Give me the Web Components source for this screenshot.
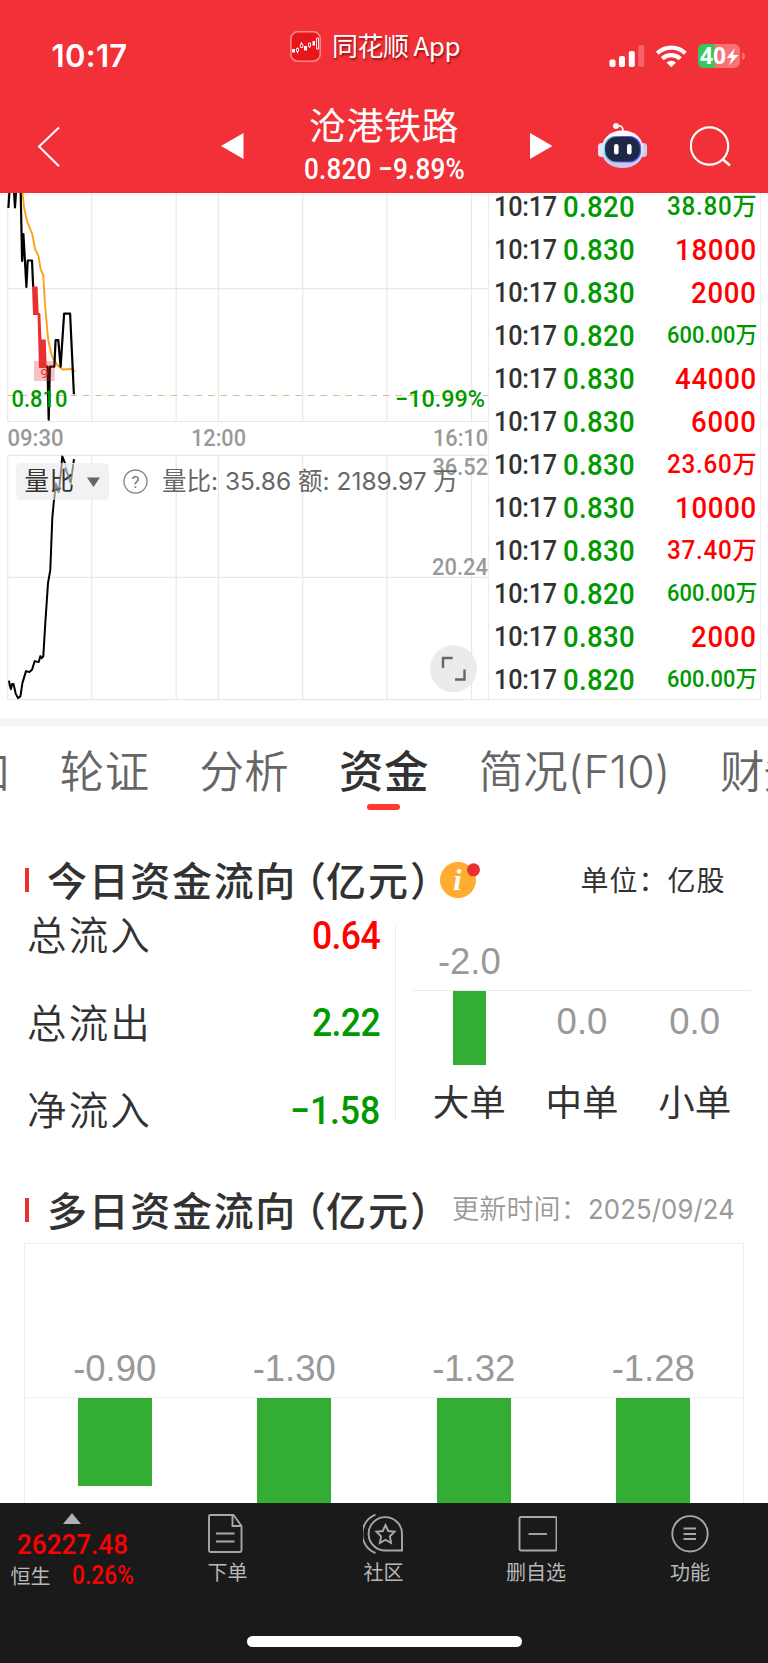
<!DOCTYPE html>
<html lang="zh-CN">
<head>
<meta charset="utf-8">
<meta name="viewport" content="width=768">
<title>沧港铁路</title>
<style>
html, body { margin: 0; padding: 0; }
body {
    width: 768px;
    height: 1663px;
    overflow: hidden;
    background: #fff;
    color: #323232;
    font-family: Inter, "Noto Sans CJK SC", sans-serif;
    --din: Roboto, "Noto Sans CJK SC", sans-serif;
    --up: #ff0000;
    --down: #009900;
    --bar: #34ad34;
    --line: #ebebeb;
}
</style>
</head>
<body>
<stock-page></stock-page>

<script>
function define(name, html, setup) {
    const template = document.createElement('template');
    template.innerHTML = html;
    customElements.define(name, class extends HTMLElement {
        constructor() {
            super();
            this.attachShadow({mode: 'open'});
            this.shadowRoot.appendChild(template.content.cloneNode(true));
        }
        connectedCallback() {
            if (setup) setup(this, this.shadowRoot);
        }
    });
}

define('status-bar', `
<style>
:host { display: flex; height: 92px; align-items: flex-start; color: #fff; }
.time { margin: 38px 0 0 51.500px; font-size: 31px; line-height: 36px; font-weight: 600; }
.logo { margin: 31px 0 0 162.500px; width: 31px; height: 31px; }
.app { margin: 27px 0 0 11px; font: 26px/36px "Noto Sans CJK SC", sans-serif; text-shadow: 1px 2px 2px rgba(90,0,0,.6); }
.sys { margin: 43px 0 0 149px; width: 138px; height: 26px; overflow: visible; }
</style>
<fit-text class="time" w="76">10:17</fit-text>
<svg class="logo" viewBox="0 0 31 31">
    <rect x=".8" y=".8" width="29.4" height="29.4" rx="7" fill="#e8151b" stroke="#f98b8e" stroke-width="1.5"/>
    <path d="M2 11h27M2 21h27M11 2v27M22 2v27" stroke="#d5262a" stroke-width=".6"/>
    <path d="M2 18h3v3.500H2zM14 15h3v4.500h-3zM22.500 10h2.500v4.500h-2.500z" fill="#fff"/>
    <path d="M7.500 17.500v-1M6.500 17.500h2v3h-2zM7.500 20.500v2M11.500 13v-2M10.300 13h2.500v3.500h-2.500zM18.500 12h2v3.500h-2zM19.500 15.500v1.500M26.500 7h2v11h-2z" fill="none" stroke="#fff" stroke-width=".9"/>
</svg>
<fit-text class="app" w="128">同花顺 App</fit-text>
<svg class="sys" viewBox="609 43 138 26">
    <g fill="#fff">
        <rect x="609.500" y="59.500" width="6" height="7.500" rx="1.800"/>
        <rect x="619" y="56" width="6" height="11" rx="1.800"/>
        <rect x="628.800" y="51" width="6" height="16" rx="1.800"/>
        <rect x="638.200" y="45" width="6" height="22" rx="1.800" opacity=".25"/>
    </g>
    <g fill="none" stroke="#fff" stroke-width="4.200">
        <path d="M657.300 53.200a20.500 20.500 0 0 1 28 0"/>
        <path d="M662.300 58.700a13 13 0 0 1 18 0"/>
    </g>
    <path d="M666.500 62.600a7 7 0 0 1 9.600 0l-4.800 4.600z" fill="#fff"/>
    <path d="M704 44h30a6 6 0 0 1 6 6v12a6 6 0 0 1-6 6h-30a6 6 0 0 1-6-6V50a6 6 0 0 1 6-6z" fill="#f77277"/>
    <path d="M704 44h10.700v24H704a6 6 0 0 1-6-6V50a6 6 0 0 1 6-6z" fill="#35c759"/>
    <path d="M742 52q3 1 3 4t-3 4z" fill="#f77277"/>
    <text x="700" y="64.300" font-family="Open Sans" font-size="22.500" font-weight="700" fill="#fff" textLength="26" lengthAdjust="spacingAndGlyphs">40</text>
    <path d="M735 48l-8.500 10h5.200l-2.800 7.500 9.600-10.500h-5.600z" fill="#fff"/>
</svg>
`);

define('stock-nav', `
<style>
:host { display: flex; height: 100px; align-items: flex-start; color: #fff; }
svg { display: block; flex: none; }
.back { margin: 34px 0 0 36px; }
.prev { margin: 41px 0 0 159px; }
.mid { width: 170px; margin-left: 54px; display: flex; flex-direction: column; align-items: center; }
.name { font: 37px/40px "Noto Sans CJK SC", sans-serif; margin-top: 12px; }
.quote { font: 500 29px/28px var(--din); margin-top: 11px; }
.next { margin: 41px 0 0 61px; }
.bot { margin: 29px 0 0 43px; }
.find { margin: 34px 0 0 42px; }
</style>
<svg class="back" width="26" height="42" viewBox="0 0 26 42"><path d="M23 1.500L3 20.500 23 40.200" fill="none" stroke="#fff" stroke-width="2"/></svg>
<svg class="prev" width="24" height="26" viewBox="0 0 24 26"><path d="M0 13L22.500 0v26z" fill="#fff"/></svg>
<div class="mid">
    <fit-text class="name" w="150">沧港铁路</fit-text>
    <fit-text class="quote" w="161" scale=".9">0.820 −9.89%</fit-text>
</div>
<svg class="next" width="24" height="26" viewBox="0 0 24 26"><path d="M22.500 13L0 0v26z" fill="#fff"/></svg>
<svg class="bot" width="51" height="48" viewBox="0 0 51 48">
    <defs>
        <linearGradient id="shell" x2="0" y2="1"><stop offset="0" stop-color="#fff"/><stop offset="1" stop-color="#c5c3ea"/></linearGradient>
        <linearGradient id="rim"><stop offset="0" stop-color="#73d9e8"/><stop offset=".5" stop-color="#6d4bd8"/><stop offset="1" stop-color="#4f65ff"/></linearGradient>
    </defs>
    <path d="M18 5q8-2 8 5" fill="none" stroke="#eee" stroke-width="1.800"/>
    <circle cx="19" cy="5" r="3" fill="#f3f1fb"/>
    <rect x="1" y="22" width="7" height="14" rx="3.500" fill="#e4e0f4"/>
    <rect x="43" y="22" width="7" height="14" rx="3.500" fill="#cfccf1"/>
    <path d="M25.500 9.500C38 9.500 46.500 17.500 46.500 28.500S38 47 25.500 47 4.500 39.500 4.500 28.500 13 9.500 25.500 9.500z" fill="url(#shell)"/>
    <rect x="7.500" y="15.500" width="36" height="25.500" rx="11" fill="#1e2948" stroke="url(#rim)" stroke-width="1.200"/>
    <rect x="17" y="23" width="4.600" height="10.500" rx="2.300" fill="#fff"/>
    <rect x="30" y="23" width="4.600" height="10.500" rx="2.300" fill="#fff"/>
</svg>
<svg class="find" width="42" height="42" viewBox="0 0 42 42"><circle cx="19.500" cy="20" r="18.700" fill="none" stroke="#fff" stroke-width="2.200"/><path d="M33 33.500l7 6" stroke="#fff" stroke-width="2.400"/></svg>
`);

define('trend-chart', `
<style>
:host { display: block; position: relative; width: 488px; height: 518px; }
svg { display: block; }
.plot { overflow: visible; }
.grid { fill: none; stroke: #e8e8e8; stroke-width: 1.200; }
text { font-family: Roboto, sans-serif; }
.axis { font-size: 23.500px; font-weight: 500; fill: #999; }
.price { font-size: 23.500px; font-weight: 500; fill: #009900; }
.menu {
    position: absolute; left: 15.500px; top: 271px; width: 93px; height: 37px; border-radius: 5px;
    background: rgba(240,240,240,.88); box-sizing: border-box; padding: 0 9px 0 9px;
    display: flex; align-items: center; justify-content: space-between; font-size: 24.500px; line-height: 35px; color: #323232;
}
.veil { position: absolute; left: 15px; top: 271px; }
.info { position: absolute; left: 123px; top: 271px; height: 37px; display: flex; align-items: center; gap: 14px; font-size: 24.500px; line-height: 37px; color: #666; }
.expand { position: absolute; left: 430px; top: 453px; }
</style>
<svg class="plot" width="488" height="518" viewBox="0 192 488 518">
    <g class="grid">
        <path d="M7.700 192v229.500h480M7.700 288.700h480M91.700 192v229.500M176.200 192v229.500M218.500 192v229.500M302.700 192v229.500M387 192v229.500M471.600 192v229.500"/>
        <path d="M487 455.300H7.700v244.400h480M7.700 577.400h480M91.700 455v245M176.200 455v245M218.500 455v245M302.700 455v245M387 455v245M471.600 455v245"/>
    </g>
    <path d="M8 395.500h480" stroke="#dcb98a" stroke-width="1.200" stroke-dasharray="6.500 6"/>
    <path d="M22.500 192l1.500 15 3 14 5.500 14 2.500 14 3.500 7 2 13 2.700 6 2 32 3 33 4 17 5 8 5.500 4.500 8.500-.5 4 2.500" fill="none" stroke="#ff9f1c" stroke-width="1.900"/>
    <path d="M8.400 208l1-16M14 192l1 15.500 1-15.500M20.700 192l1.400 69 1.300-27 3 53 1.300-26.500H32l1.200 27M45.500 366.700h2l1.200 53 1.200-53h4.400l1.300-26.500h2.700l2.300 26.500 3.500-53h6l3.800 80.500" fill="none" stroke="#000" stroke-width="2.200" stroke-linejoin="round"/>
    <path d="M32 286.500h5.500l1.200 26.500h1.600l1.200 26.500h4.200l1 27-1.700 1.500h-6l-1.500-53H33z" fill="#e93030"/>
    <rect x="34" y="361" width="20.700" height="20" fill="rgba(233,48,48,.3)"/>
    <text x="40.500" y="377.500" font-size="13.500" fill="#e93030">9</text>
    <g class="axis">
        <text x="7.500" y="445.500" textLength="56" lengthAdjust="spacingAndGlyphs">09:30</text>
        <text x="191" y="445.500" textLength="55" lengthAdjust="spacingAndGlyphs">12:00</text>
        <text x="433" y="445.500" textLength="55" lengthAdjust="spacingAndGlyphs">16:10</text>
        <text x="432.500" y="475" textLength="55.500" lengthAdjust="spacingAndGlyphs">36.52</text>
        <text x="432" y="575.300" textLength="56" lengthAdjust="spacingAndGlyphs">20.24</text>
    </g>
    <g class="price">
        <text x="11.500" y="407" textLength="56" lengthAdjust="spacingAndGlyphs">0.810</text>
        <text x="395" y="407" textLength="90" lengthAdjust="spacingAndGlyphs">−10.99%</text>
    </g>
    <path d="M9 680.600l.7 4.500 1.300 4 1-5h1.500l2.200 9.500 2.300 4.500 2.400-1.700 2-13.300 3.600-12 3.400 1 2.600-2.300 2.700-8.700 4 1 1.700-6 1.300 2 1.600-1.700 2-33.300 2.700-40 2.300-13.300 2-51.700 2-21.700 1.400-13.300 3 9.300 3.600-36 2.700 6.700 5.700 20 3.300-24" fill="none" stroke="#000" stroke-width="2" stroke-linejoin="round"/>
</svg>
<div class="menu"><fit-text w="50">量比</fit-text><svg width="13" height="10"><path d="M0 .5h13L6.500 10z" fill="#666"/></svg></div>
<svg class="veil" width="93" height="37" viewBox="15 463 93 37"><path d="M54.300 500l1.400-16.700 3 9.300 3.300-30M65 467.500l5.700 15.800 2.500-19" fill="none" stroke="#777" stroke-width="1.700" opacity=".8"/></svg>
<div class="info">
    <svg width="25" height="25" viewBox="0 0 25 25"><circle cx="12.500" cy="12.500" r="11.500" fill="none" stroke="#888" stroke-width="1.400"/><text x="12.500" y="18.500" text-anchor="middle" font-size="17" fill="#777">?</text></svg>
    <fit-text w="296">量比: 35.86 额: 2189.97 万</fit-text>
</div>
<svg class="expand" width="48" height="48" viewBox="0 0 48 48"><circle cx="23.500" cy="23.700" r="23.500" fill="#ebebeb"/><path d="M22.700 13H13v10M25 34.500h9.500v-10" fill="none" stroke="#666" stroke-width="2.400"/></svg>
`);

const ticks = [
    ['0.820', '38.80万', 'down', 'm'],
    ['0.830', '18000', 'up', ''],
    ['0.830', '2000', 'up', ''],
    ['0.820', '600.00万', 'down', 's'],
    ['0.830', '44000', 'up', ''],
    ['0.830', '6000', 'up', ''],
    ['0.830', '23.60万', 'up', 'm'],
    ['0.830', '10000', 'up', ''],
    ['0.830', '37.40万', 'up', 'm'],
    ['0.820', '600.00万', 'down', 's'],
    ['0.830', '2000', 'up', ''],
    ['0.820', '600.00万', 'down', 's']
];

define('tick-list', `
<style>
:host { display: block; width: 271px; height: 507px; overflow: hidden; border: 1px solid var(--line); border-width: 0 1px 1px 1.500px; }
.rows { margin-top: -7px; }
.row { display: flex; align-items: center; height: 43px; padding: 0 3px 0 4.500px; font-family: var(--din); font-weight: 500; font-size: 30px; line-height: 43px; }
.time { font-size: 28px; margin-right: 6px; }
.price { color: var(--down); }
.vol { margin-left: auto; }
.up { color: var(--up); }
.down { color: var(--down); }
.m { font-size: 25.500px; }
.s { font-size: 23px; }
</style>
<div class="rows"></div>
`, (el, root) => {
    root.querySelector('.rows').innerHTML = ticks.map(([price, vol, dir, size]) => `
        <div class="row">
            <fit-text class="time" w="63" scale=".9">10:17</fit-text>
            <fit-text class="price" w="72" scale=".92">${price}</fit-text>
            <fit-text class="vol ${dir} ${size}" w="${size ? 90.500 : vol.length * 16.400}" scale="${size ? 0.95 : 0.92}">${vol}</fit-text>
        </div>`).join('');
});

define('tab-strip', `
<style>
:host { display: flex; gap: 49.700px; width: 803px; height: 92px; box-sizing: border-box; margin-left: -35px; border-top: 8px solid #f5f5f5; font: 350 44.500px/92px Inter, "Noto Sans CJK SC", sans-serif; color: #666; }
fit-text { flex: none; height: 84px; }
.on { font-weight: 500; color: #323232; position: relative; }
.on::after { content: ""; position: absolute; left: 28px; bottom: 0; width: 33px; height: 6px; border-radius: 3px; background: #ff3931; }
</style>
<fit-text w="45">加</fit-text>
<fit-text w="90">轮证</fit-text>
<fit-text w="90">分析</fit-text>
<fit-text w="90" class="on">资金</fit-text>
<fit-text w="191.500">简况(F10)</fit-text>
<fit-text w="86">财务</fit-text>
`);

define('section-title', `
<style>
:host { display: flex; height: 24px; align-items: center; padding-left: 25px; line-height: 24px; white-space: nowrap; }
i { width: 4px; height: 24px; background: #e93030; margin-right: 18px; }
.text { display: flex; width: 393px; font: 550 40px/24px "Noto Sans CJK SC", sans-serif; margin-top: -2px; }
.paren { font-feature-settings: "halt"; }
.open { margin-left: 9px; }
</style>
<i></i>
<div class="text"><fit-text w="250"><slot name="title"></slot></fit-text><span class="paren open">（</span><fit-text w="84">亿元</fit-text><span class="paren">）</span></div>
<slot></slot>
`);

define('today-flow', `
<style>
:host { display: flex; height: 262px; }
.totals { width: 379px; box-sizing: border-box; padding-left: 27px; }
.row { display: flex; justify-content: space-between; align-items: center; height: 87.500px; font: 350 39.500px/60px "Noto Sans CJK SC", sans-serif; }
.label { margin-top: -5px; }
b { font: 500 39.500px/60px var(--din); margin-right: -1px; }
.up { color: var(--up); }
.down { color: var(--down); }
.rule { width: 1.500px; height: 195px; margin: 34px 17px 0 15.500px; background: #ebebeb; }
.orders { width: 338px; display: grid; grid-template-columns: repeat(3, 1fr); text-align: center; }
.col { display: flex; flex-direction: column; align-items: center; }
.above { width: 100%; height: 99px; border-bottom: 1px solid #ebebeb; box-sizing: border-box; padding-top: 49px; }
.below { height: 82px; }
.num { font: 36.500px/42px "Liberation Sans", sans-serif; color: #999; }
.below .num { margin-top: 10px; }
.fill { width: 33px; height: 73.500px; background: var(--bar); }
.name { font: 36.500px/56px "Noto Sans CJK SC", sans-serif; color: #323232; }
</style>
<div class="totals">
    <div class="row"><fit-text class="label" w="125">总流入</fit-text><b class="up"><fit-text w="68" scale=".9">0.64</fit-text></b></div>
    <div class="row"><fit-text class="label" w="125">总流出</fit-text><b class="down"><fit-text w="68" scale=".9">2.22</fit-text></b></div>
    <div class="row"><fit-text class="label" w="125">净流入</fit-text><b class="down"><fit-text w="90" scale=".9">−1.58</fit-text></b></div>
</div>
<div class="rule"></div>
<div class="orders">
    <div class="col"><div class="above num">-2.0</div><div class="below"><div class="fill"></div></div><div class="name">大单</div></div>
    <div class="col"><div class="above"></div><div class="below"><div class="num">0.0</div></div><div class="name">中单</div></div>
    <div class="col"><div class="above"></div><div class="below"><div class="num">0.0</div></div><div class="name">小单</div></div>
</div>
`);

define('daily-bars', `
<style>
:host { display: grid; grid-template-columns: repeat(4, 1fr); box-sizing: border-box; height: 260px; margin: 21px 24px 0; border: 1.500px solid #f0f0f0; border-bottom: 0; overflow: hidden; }
.head { height: 154px; box-sizing: border-box; border-bottom: 1.500px solid #f0f0f0; padding-top: 104px; text-align: center; font: 36.500px/42px "Liberation Sans", sans-serif; color: #999; }
.fill { width: 74px; margin: 0 auto; background: var(--bar); }
</style>
`, (el, root) => {
    [['-0.90', 88], ['-1.30', 127], ['-1.32', 129], ['-1.28', 125]].forEach(([value, height]) => {
        const day = document.createElement('div');
        day.innerHTML = `<div class="head">${value}</div><div class="fill" style="height:${height}px"></div>`;
        root.appendChild(day);
    });
});

define('bar-item', `
<style>
:host { display: flex; flex-direction: column; align-items: center; }
.label { font: 20px/28px "Noto Sans CJK SC", sans-serif; color: #b8b8b8; margin-top: 3px; }
</style>
<slot name="icon"></slot>
<div class="label"><slot></slot></div>
`);

define('bottom-bar', `
<style>
:host { display: flex; flex-direction: column; height: 160px; background: #1a1a1a; }
.items { display: flex; height: 133px; }
.index { width: 144px; display: flex; flex-direction: column; align-items: center; color: var(--up); font-family: var(--din); }
.index svg { margin-top: 10px; }
.point { font-size: 28px; font-weight: 500; line-height: 34px; margin-top: 4px; }
.sub { display: flex; align-items: center; font-size: 25px; font-weight: 500; line-height: 30px; gap: 21px; margin-top: -1px; }
.hs { font: 20px/30px "Noto Sans CJK SC", sans-serif; color: #b8b8b8; }
bar-item { padding-top: 10px; }
bar-item svg { fill: none; stroke: #a8a8a8; stroke-width: 1.900; }
.home { width: 275px; height: 11px; border-radius: 6px; background: #fff; margin-left: 247px; }
</style>
<div class="items">
    <div class="index">
        <svg width="18" height="11"><path d="M0 11L9 0l9 11z" fill="#b0b0b0"/></svg>
        <fit-text class="point" w="111" scale=".93">26227.48</fit-text>
        <div class="sub"><span class="hs">恒生</span><fit-text w="62" scale=".9">0.26%</fit-text></div>
    </div>
    <bar-item style="width:167px">
        <svg slot="icon" width="42" height="42" viewBox="0 0 42 42"><path d="M7 2h19.500l8 11v24.500a1.500 1.500 0 0 1-1.500 1.500H3.500A1.500 1.500 0 0 1 2 37.500V3.500A1.500 1.500 0 0 1 3.500 2H7M25.500 2v11h9M9 20.500h18.500M9 28.500h18.500"/></svg>
        下单
    </bar-item>
    <bar-item style="width:145px">
        <svg slot="icon" width="42" height="42" viewBox="0 0 42 42"><path d="M12.500 1.700A20.500 20.500 0 0 0 12.500 40M39 37.500H22.500a16.700 16.700 0 1 1 16.500-16.700zM22.500 12l2.700 6 6.400.8-4.700 4.600 1.200 6.600-5.600-3.200-5.600 3.200 1.200-6.600-4.700-4.600 6.400-.8z"/></svg>
        社区
    </bar-item>
    <bar-item style="width:160px">
        <svg slot="icon" width="42" height="42" viewBox="0 0 42 42"><rect x="4.500" y="4" width="37" height="33.500" rx="1.500"/><path d="M13.500 21H32"/></svg>
        删自选
    </bar-item>
    <bar-item style="width:148px">
        <svg slot="icon" width="42" height="42" viewBox="0 0 42 42"><circle cx="21" cy="20.800" r="17.700"/><path d="M14.500 15.500H27M14.500 21H27M14.500 26H27"/></svg>
        功能
    </bar-item>
</div>
<div class="home"></div>
`);

define('stock-page', `
<style>
:host { display: flex; flex-direction: column; width: 768px; height: 1663px; overflow: hidden; }
header { height: 193px; margin-bottom: -1px; position: relative; z-index: 1; background: #f23037; }
.quote { display: flex; height: 526px; }
.today { margin-top: 58px; }
.multi { margin-top: 44px; }
.unit { font: 28px/24px "Noto Sans CJK SC", sans-serif; margin: -2px 0 0 99.500px; }
.date { font-size: 27px; color: #999; }
.label { margin-left: 12px; font-weight: 350; }
.tip { margin-bottom: 2px; }
</style>
<header>
    <status-bar></status-bar>
    <stock-nav></stock-nav>
</header>
<div class="quote">
    <trend-chart></trend-chart>
    <tick-list></tick-list>
</div>
<tab-strip></tab-strip>
<section-title class="today">
    <span slot="title">今日资金流向</span>
    <svg class="tip" width="41" height="38" viewBox="0 0 41 38">
        <circle cx="18" cy="20" r="18" fill="#ffac30"/>
        <text x="17.500" y="30" text-anchor="middle" font-family="Liberation Serif" font-style="italic" font-weight="700" font-size="30" fill="#fff">i</text>
        <circle cx="33.500" cy="9.800" r="6.500" fill="#e93030"/>
    </svg>
    <fit-text class="unit" w="145">单位：亿股</fit-text>
</section-title>
<today-flow></today-flow>
<section-title class="multi">
    <span slot="title">多日资金流向</span>
    <fit-text class="date label" w="136">更新时间：</fit-text><fit-text class="date" w="147" scale=".95">2025/09/24</fit-text>
</section-title>
<daily-bars></daily-bars>
<bottom-bar></bottom-bar>
`);

// Spreads its text over exactly w pixels by letter spacing; scale narrows the digits first
define('fit-text', `
<style>
:host { display: inline-block; white-space: nowrap; }
span { display: inline-block; transform-origin: 0 50%; }
</style>
<span><slot></slot></span>
`, (el, root) => {
    const span = root.querySelector('span');
    const width = Number(el.getAttribute('w'));
    const scale = Number(el.getAttribute('scale') || 1);
    const slot = el.querySelector('slot');
    const text = slot ? slot.assignedNodes()[0].textContent : el.textContent;
    const space = (width / scale - span.getBoundingClientRect().width) / text.trim().length;
    span.style.letterSpacing = space + 'px';
    if (scale !== 1) span.style.transform = `scaleX(${scale})`;
    el.style.width = width + 'px';
});
</script>
</body>
</html>
